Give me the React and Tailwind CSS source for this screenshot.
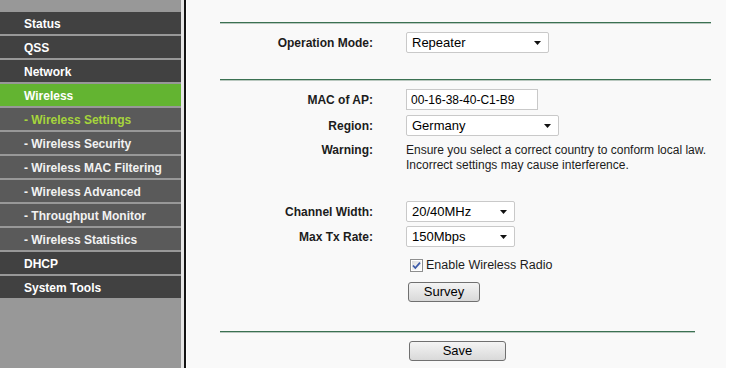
import React from "react";

const menu = [
  { label: "Status", type: "main" },
  { label: "QSS", type: "main" },
  { label: "Network", type: "main" },
  { label: "Wireless", type: "active" },
  { label: "- Wireless Settings", type: "subActive" },
  { label: "- Wireless Security", type: "sub" },
  { label: "- Wireless MAC Filtering", type: "sub" },
  { label: "- Wireless Advanced", type: "sub" },
  { label: "- Throughput Monitor", type: "sub" },
  { label: "- Wireless Statistics", type: "sub" },
  { label: "DHCP", type: "main" },
  { label: "System Tools", type: "main" },
];

const rowStyles = {
  main: "bg-[#414141] text-white",
  active: "bg-[#63b431] text-white",
  sub: "bg-[#5a5a5a] text-[#f2f2f2]",
  subActive: "bg-[#5a5a5a] text-[#a6d53c]",
};

const Arrow = () => (
  <svg width="7" height="4" viewBox="0 0 7 4" className="shrink-0">
    <path d="M0 0 L7 0 L3.5 4 Z" fill="#111" />
  </svg>
);

const Select = ({ value, width }) => (
  <div
    className={`${width} h-[21px] flex items-center justify-between pl-[5px] pr-[7px] bg-white border border-[#c9c9c9] rounded-[2px] text-[13px] text-black`}
  >
    <span>{value}</span>
    <Arrow />
  </div>
);

const Divider = ({ width }) => (
  <div className={`${width} border-t border-t-[#3b7152] border-b border-b-[#b9c8bf]`} />
);

const Label = ({ children }) => (
  <div className="w-[153px] shrink-0 text-right font-bold text-[12px] text-[#1c1c1c]">
    {children}
  </div>
);

const Button = ({ children, width }) => (
  <div
    className={`${width} h-[20px] flex items-center justify-center border border-[#707070] rounded-[3px] bg-gradient-to-b from-[#f4f4f4] to-[#d9d9d9] text-[13px] text-black`}
  >
    {children}
  </div>
);

export default function App() {
  return (
    <div
      className="flex w-[736px] h-[368px] overflow-hidden bg-white"
      style={{ fontFamily: '"Liberation Sans", Arial, sans-serif' }}
    >
      {/* sidebar */}
      <div className="w-[181px] shrink-0 bg-[#989898] pt-[12px]">
        {menu.map((item) => (
          <div
            key={item.label}
            className={`h-[22px] mb-[2px] flex items-center pl-[24px] pt-[2px] font-bold text-[12px] ${rowStyles[item.type]}`}
          >
            {item.label}
          </div>
        ))}
      </div>
      <div className="w-[3px] shrink-0 bg-[#e6e6e6]" />
      <div className="w-[2px] shrink-0 bg-[#141414]" />
      <div className="w-[1px] shrink-0 bg-white" />

      {/* content */}
      <div className="w-[539px] shrink-0 bg-[#f9f9f9] pl-[33px] pt-[22px] text-[12px] text-[#222]">
        <Divider width="w-[491px]" />

        <div className="flex items-center mt-[8px]">
          <Label>Operation Mode:</Label>
          <div className="ml-[33px]">
            <Select value="Repeater" width="w-[143px]" />
          </div>
        </div>

        <div className="mt-[26px]">
          <Divider width="w-[491px]" />
        </div>

        <div className="flex items-center mt-[8px]">
          <Label>MAC of AP:</Label>
          <div className="ml-[33px] w-[132px] h-[21px] flex items-center pl-[4px] bg-white border border-[#c9c9c9] text-[12px] text-black">
            00-16-38-40-C1-B9
          </div>
        </div>

        <div className="flex items-center mt-[5px]">
          <Label>Region:</Label>
          <div className="ml-[33px]">
            <Select value="Germany" width="w-[153px]" />
          </div>
        </div>

        <div className="flex mt-[7px] leading-[15px]">
          <Label>Warning:</Label>
          <div className="ml-[33px] text-[12px] text-[#1c1c1c]">
            Ensure you select a correct country to conform local law.
            <br />
            Incorrect settings may cause interference.
          </div>
        </div>

        <div className="flex items-center mt-[28px]">
          <Label>Channel Width:</Label>
          <div className="ml-[33px]">
            <Select value="20/40MHz" width="w-[109px]" />
          </div>
        </div>

        <div className="flex items-center mt-[4px]">
          <Label>Max Tx Rate:</Label>
          <div className="ml-[33px]">
            <Select value="150Mbps" width="w-[109px]" />
          </div>
        </div>

        <div className="flex items-center h-[16px] mt-[10px] pl-[190px]">
          <svg width="13" height="13" viewBox="0 0 13 13" className="shrink-0">
            <defs>
              <linearGradient id="cb" x1="0" y1="0" x2="1" y2="1">
                <stop offset="0" stopColor="#dcdcdc" />
                <stop offset="1" stopColor="#ffffff" />
              </linearGradient>
            </defs>
            <rect x="0.5" y="0.5" width="12" height="12" fill="#fff" stroke="#8e8f8f" />
            <rect x="2" y="2" width="9" height="9" fill="url(#cb)" />
            <path d="M3 6.5 L5.3 9 L10 3.6" fill="none" stroke="#3c5aa8" strokeWidth="1.8" />
          </svg>
          <span className="ml-[3px] text-[12.5px] text-[#1c1c1c]">Enable Wireless Radio</span>
        </div>

        <div className="mt-[9px] pl-[188px]">
          <Button width="w-[72px]">Survey</Button>
        </div>

        <div className="mt-[29px]">
          <Divider width="w-[475px]" />
        </div>

        <div className="mt-[8px] w-[475px] flex justify-center">
          <Button width="w-[97px]">Save</Button>
        </div>
      </div>
      <div className="flex-1 bg-white" />
    </div>
  );
}
